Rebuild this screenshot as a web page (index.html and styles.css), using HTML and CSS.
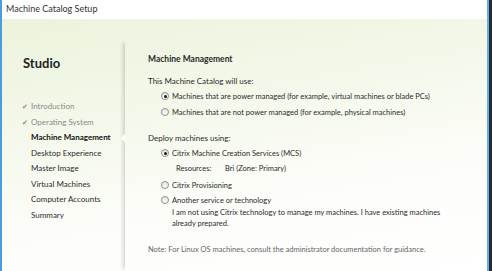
FILE: index.html
```html
<!DOCTYPE html>
<html lang="en">
<head>
  <meta charset="UTF-8" />
  <title>Machine Catalog Setup</title>
  <link rel="stylesheet" href="styles.css">
</head>
<body>
  <div class="window">
    <div class="titlebar">Machine Catalog Setup</div>

    <div class="main">
      <!-- Wizard steps -->
      <div class="sidebar">
        <div class="brand">Studio</div>
        <ul class="steps">
          <li class="done"><span class="tick">✔</span>Introduction</li>
          <li class="done"><span class="tick">✔</span>Operating System</li>
          <li class="current">Machine Management</li>
          <li>Desktop Experience</li>
          <li>Master Image</li>
          <li>Virtual Machines</li>
          <li>Computer Accounts</li>
          <li>Summary</li>
        </ul>
      </div>

      <!-- Page -->
      <div class="content">
        <span class="notch"></span>
        <h1>Machine Management</h1>

        <div class="group-label first">This Machine Catalog will use:</div>
        <label class="option"><span class="radio checked"></span>Machines that are power managed (for example, virtual machines or blade PCs)</label>
        <label class="option"><span class="radio"></span>Machines that are not power managed (for example, physical machines)</label>

        <div class="group-label">Deploy machines using:</div>
        <label class="option"><span class="radio checked"></span>Citrix Machine Creation Services (MCS)</label>
        <div class="resources"><span class="res-key">Resources:</span>Bri (Zone: Primary)</div>
        <label class="option"><span class="radio"></span>Citrix Provisioning</label>
        <label class="option short"><span class="radio"></span>Another service or technology</label>
        <div class="desc">I am not using Citrix technology to manage my machines. I have existing machines already prepared.</div>

        <div class="note">Note: For Linux OS machines, consult the administrator documentation for guidance.</div>
      </div>
    </div>
  </div>
</body>
</html>
```

FILE: styles.css
```css
html, body {
  margin: 0;
  height: 100%;
}

body {
  font-family: Lato, 'Noto Sans', sans-serif;
  font-size: 7.5px;
  color: #2b2b2b;
  background-color: #1f2a36;
  overflow: hidden;
}

.window {
  width: 485px;
  height: 271px;
  border-left: 2px solid #4a9be0;
  border-right: 2px solid #6aaee6;
  display: flex;
  flex-direction: column;
}

.titlebar {
  height: 19px;
  line-height: 18px;
  padding-left: 4px;
  background-color: #fff;
  font-size: 9px;
  color: #333;
  box-sizing: border-box;
}

.main {
  flex: 1;
  display: flex;
  background: linear-gradient(170deg, #ebf3dc 0%, #f4f8ea 35%, #fcfdf9 65%, #fff 100%);
}

.sidebar {
  width: 123px;
  flex-shrink: 0;
}

.brand {
  margin: 36px 0 0 21px;
  font-size: 13px;
  font-weight: bold;
  line-height: 16px;
  color: #222;
}

.steps {
  list-style: none;
  margin: 28px 0 0 0;
  padding: 0 0 0 29px;
  font-size: 8px;
}

.steps li {
  line-height: 15.5px;
  white-space: nowrap;
  position: relative;
}

.steps li.done {
  color: #8a8a8a;
}

.steps li.current {
  font-weight: bold;
  color: #111;
}

.tick {
  position: absolute;
  left: -9px;
  font-size: 7px;
  color: #8a8a8a;
}

.content {
  flex: 1;
  position: relative;
  margin-top: 22px;
  padding: 11px 0 0 23px;
  box-shadow: -4px 0 4px -2px rgba(0, 0, 0, 0.16);
  clip-path: inset(0 0 0 -10px);
}

.notch {
  position: absolute;
  left: -4px;
  top: 93px;
  width: 0;
  height: 0;
  border-top: 4px solid transparent;
  border-bottom: 4px solid transparent;
  border-right: 4px solid #fff;
}

h1 {
  margin: 0;
  font-size: 8.5px;
  font-weight: bold;
  line-height: 14px;
  color: #2b2b2b;
}

.group-label {
  margin-top: 12px;
  line-height: 13px;
  font-size: 8px;
}

.group-label.first {
  margin-top: 9px;
}

.option {
  display: flex;
  align-items: center;
  height: 16px;
  padding-left: 13px;
}

.option.short {
  height: 14px;
}

.radio {
  box-sizing: border-box;
  width: 8px;
  height: 8px;
  border: 1px solid #8d8d8d;
  border-radius: 50%;
  background: linear-gradient(#e6e6e6, #fbfbfb);
  margin-right: 3px;
  display: flex;
  align-items: center;
  justify-content: center;
}

.radio.checked::after {
  content: "";
  width: 3px;
  height: 3px;
  border-radius: 50%;
  background-color: #1a1a1a;
}

.resources {
  line-height: 16px;
  padding-left: 28px;
}

.res-key {
  display: inline-block;
  width: 49px;
}

.desc {
  padding-left: 24px;
  width: 280px;
  line-height: 11px;
}

.note {
  margin-top: 14px;
  line-height: 14px;
  color: #666;
}
```
